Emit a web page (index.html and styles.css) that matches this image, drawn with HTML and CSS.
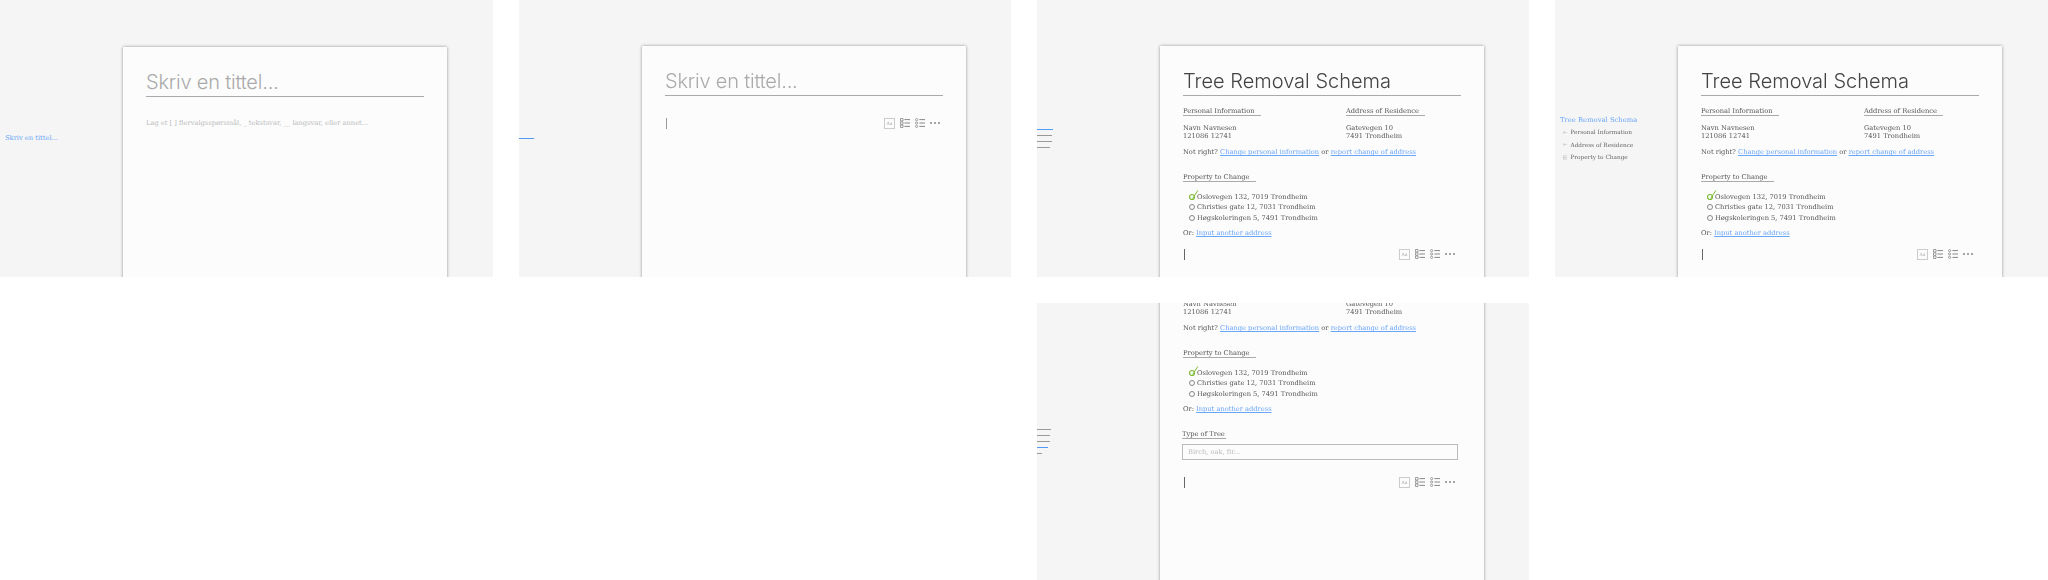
FILE: index.html
```html
<!DOCTYPE html>
<html lang="no">
<head>
    <meta charset="UTF-8">
    <meta name="viewport" content="width=device-width, initial-scale=1.0">
    <title>Tree Removal Schema</title>
    <link rel="stylesheet" href="styles.css">
</head>
<body>
    <!-- Ikoner -->
    <svg class="icon-defs" aria-hidden="true">
        <symbol id="icon-radio-list" viewBox="0 0 10 10">
            <path d="M0.5 0.5h2.5v2.5h-2.5z M0.5 3.8h2.5v2.5h-2.5z M0.5 7h2.5v2.5h-2.5z" fill="none" stroke="currentColor" stroke-width="0.8"/>
            <path d="M4.4 1.6h5.6 M4.4 5h5.6 M4.4 8.4h5.6" stroke="currentColor" stroke-width="1"/>
        </symbol>
        <symbol id="icon-check-list" viewBox="0 0 10 10">
            <circle cx="1.6" cy="1.6" r="1.1" fill="none" stroke="currentColor" stroke-width="0.8"/>
            <circle cx="1.6" cy="5" r="1.1" fill="none" stroke="currentColor" stroke-width="0.8"/>
            <circle cx="1.6" cy="8.4" r="1.1" fill="none" stroke="currentColor" stroke-width="0.8"/>
            <path d="M4.4 1.6h5.6 M4.4 5h5.6 M4.4 8.4h5.6" stroke="currentColor" stroke-width="1"/>
        </symbol>
        <symbol id="icon-more" viewBox="0 0 10 10">
            <circle cx="1" cy="5" r="1" fill="currentColor"/>
            <circle cx="5" cy="5" r="1" fill="currentColor"/>
            <circle cx="9" cy="5" r="1" fill="currentColor"/>
        </symbol>
        <symbol id="icon-text-field" viewBox="0 0 6 6">
            <path d="M1 1v4 M1 3h4" fill="none" stroke="currentColor" stroke-width="0.6"/>
        </symbol>
        <symbol id="icon-options" viewBox="0 0 6 6">
            <path d="M0.5 0.8h5 M0.5 3h5 M0.5 5.2h5 M0.5 0.8v4.4" fill="none" stroke="currentColor" stroke-width="0.6"/>
        </symbol>
        <symbol id="icon-ticked" viewBox="0 0 10 12">
            <circle cx="3" cy="8" r="2.5" fill="none" stroke="#7dbb35" stroke-width="1.2"/>
            <path d="M3.6 9.6 L8.8 1.5" fill="none" stroke="#7dbb35" stroke-width="1"/>
        </symbol>
    </svg>

    <main class="board">
        <!-- 1: tomt skjema -->
        <section class="frame">
            <aside class="outline">
                <span class="outline-title">Skriv en tittel...</span>
            </aside>
            <div class="sheet sheet-low">
                <h1 class="doc-title is-empty">Skriv en tittel...</h1>
                <p class="hint">Lag et [ ] flervalgsspørsmål, _ tekstsvar, __ langsvar, eller annet...</p>
            </div>
        </section>

        <!-- 2: markør i tomt skjema -->
        <section class="frame">
            <aside class="outline">
                <div class="bars">
                    <i class="bar bar-active bar-15"></i>
                </div>
            </aside>
            <div class="sheet">
                <h1 class="doc-title is-empty">Skriv en tittel...</h1>
                <div class="editor editor-first">
                    <span class="cursor cursor-light"></span>
                    <div class="tools tools-wide">
                        <span class="tool-text">Aa</span>
                        <svg class="tool"><use href="#icon-radio-list"/></svg>
                        <svg class="tool"><use href="#icon-check-list"/></svg>
                        <svg class="tool"><use href="#icon-more"/></svg>
                    </div>
                </div>
            </div>
        </section>

        <!-- 3: utfylt skjema, kollapset meny -->
        <section class="frame">
            <aside class="outline">
                <div class="bars">
                    <i class="bar bar-active bar-16"></i>
                    <i class="bar bar-15"></i>
                    <i class="bar bar-15"></i>
                    <i class="bar bar-13"></i>
                </div>
            </aside>
            <div class="sheet">
                <h1 class="doc-title">Tree Removal Schema</h1>
                <div class="columns">
                    <div class="column">
                        <h2 class="section-title">Personal Information</h2>
                        <p class="address">Navn Navnesen<br>121086 12741</p>
                    </div>
                    <div class="column">
                        <h2 class="section-title">Address of Residence</h2>
                        <p class="address">Gatevegen 10<br>7491 Trondheim</p>
                    </div>
                </div>
                <p class="note">Not right? <a href="#">Change personal information</a> or <a href="#">report change of address</a></p>
                <h2 class="section-title section-gap">Property to Change</h2>
                <ul class="options">
                    <li><svg class="tick"><use href="#icon-ticked"/></svg>Oslovegen 132, 7019 Trondheim</li>
                    <li><span class="radio"></span>Christies gate 12, 7031 Trondheim</li>
                    <li><span class="radio"></span>Høgskoleringen 5, 7491 Trondheim</li>
                </ul>
                <p class="note-or">Or: <a href="#">Input another address</a></p>
                <div class="editor">
                    <span class="cursor"></span>
                    <div class="tools">
                        <span class="tool-text">Aa</span>
                        <svg class="tool"><use href="#icon-radio-list"/></svg>
                        <svg class="tool"><use href="#icon-check-list"/></svg>
                        <svg class="tool"><use href="#icon-more"/></svg>
                    </div>
                </div>
            </div>
        </section>

        <!-- 4: utfylt skjema, åpen meny -->
        <section class="frame">
            <aside class="outline">
                <nav class="outline-list">
                    <a class="outline-head" href="#">Tree Removal Schema</a>
                    <span class="outline-item"><svg class="outline-icon"><use href="#icon-text-field"/></svg>Personal Information</span>
                    <span class="outline-item"><svg class="outline-icon"><use href="#icon-text-field"/></svg>Address of Residence</span>
                    <span class="outline-item"><svg class="outline-icon"><use href="#icon-options"/></svg>Property to Change</span>
                </nav>
            </aside>
            <div class="sheet">
                <h1 class="doc-title">Tree Removal Schema</h1>
                <div class="columns">
                    <div class="column">
                        <h2 class="section-title">Personal Information</h2>
                        <p class="address">Navn Navnesen<br>121086 12741</p>
                    </div>
                    <div class="column">
                        <h2 class="section-title">Address of Residence</h2>
                        <p class="address">Gatevegen 10<br>7491 Trondheim</p>
                    </div>
                </div>
                <p class="note">Not right? <a href="#">Change personal information</a> or <a href="#">report change of address</a></p>
                <h2 class="section-title section-gap">Property to Change</h2>
                <ul class="options">
                    <li><svg class="tick"><use href="#icon-ticked"/></svg>Oslovegen 132, 7019 Trondheim</li>
                    <li><span class="radio"></span>Christies gate 12, 7031 Trondheim</li>
                    <li><span class="radio"></span>Høgskoleringen 5, 7491 Trondheim</li>
                </ul>
                <p class="note-or">Or: <a href="#">Input another address</a></p>
                <div class="editor">
                    <span class="cursor"></span>
                    <div class="tools">
                        <span class="tool-text">Aa</span>
                        <svg class="tool"><use href="#icon-radio-list"/></svg>
                        <svg class="tool"><use href="#icon-check-list"/></svg>
                        <svg class="tool"><use href="#icon-more"/></svg>
                    </div>
                </div>
            </div>
        </section>

        <!-- 5: rullet ned, nytt tekstfelt -->
        <section class="frame frame-scrolled">
            <aside class="outline">
                <div class="bars">
                    <i class="bar bar-14"></i>
                    <i class="bar bar-13"></i>
                    <i class="bar bar-13"></i>
                    <i class="bar bar-active bar-11"></i>
                    <i class="bar bar-5"></i>
                </div>
            </aside>
            <div class="sheet sheet-scrolled">
                <h1 class="doc-title">Tree Removal Schema</h1>
                <div class="columns">
                    <div class="column">
                        <h2 class="section-title">Personal Information</h2>
                        <p class="address">Navn Navnesen<br>121086 12741</p>
                    </div>
                    <div class="column">
                        <h2 class="section-title">Address of Residence</h2>
                        <p class="address">Gatevegen 10<br>7491 Trondheim</p>
                    </div>
                </div>
                <p class="note">Not right? <a href="#">Change personal information</a> or <a href="#">report change of address</a></p>
                <h2 class="section-title section-gap">Property to Change</h2>
                <ul class="options">
                    <li><svg class="tick"><use href="#icon-ticked"/></svg>Oslovegen 132, 7019 Trondheim</li>
                    <li><span class="radio"></span>Christies gate 12, 7031 Trondheim</li>
                    <li><span class="radio"></span>Høgskoleringen 5, 7491 Trondheim</li>
                </ul>
                <p class="note-or">Or: <a href="#">Input another address</a></p>
                <h2 class="section-title section-gap section-short">Type of Tree</h2>
                <div class="text-input">Birch, oak, fir...</div>
                <div class="editor editor-after-input">
                    <span class="cursor"></span>
                    <div class="tools">
                        <span class="tool-text">Aa</span>
                        <svg class="tool"><use href="#icon-radio-list"/></svg>
                        <svg class="tool"><use href="#icon-check-list"/></svg>
                        <svg class="tool"><use href="#icon-more"/></svg>
                    </div>
                </div>
            </div>
        </section>
    </main>
</body>
</html>
```

FILE: styles.css
```css
body {
    margin: 0;
    background-color: #fff;
    font-family: "DejaVu Serif", "Liberation Serif", serif;
    font-size: 6.7px;
    line-height: 8px;
    color: #555;
}

a {
    color: #6aa6f8;
}

.icon-defs {
    display: none;
}

/* Rutenett med skjermbilder */
.board {
    display: grid;
    grid-template-columns: 493px 492px 492px 493px;
    grid-template-rows: 277px 277px;
    column-gap: 26px;
    row-gap: 26px;
    filter: blur(0.3px);
}

.frame {
    display: flex;
    align-items: flex-start;
    height: 277px;
    overflow: hidden;
    background-color: #f5f5f5;
}

.frame-scrolled {
    grid-column: 3;
}

/* Meny til venstre */
.outline {
    flex: none;
    display: flex;
    align-items: center;
    width: 123px;
    height: 277px;
}

.outline-title {
    margin-left: 5px;
    margin-bottom: 1px;
    color: #6aa6f8;
}

.bars {
    display: flex;
    flex-direction: column;
    gap: 5px;
}

.bar {
    display: block;
    height: 1px;
    background-color: #999;
}

.bar-active {
    background-color: #4f9bf7;
}

.bar-16 { width: 16px; }
.bar-15 { width: 15px; }
.bar-14 { width: 14px; }
.bar-13 { width: 13px; }
.bar-11 { width: 11px; }
.bar-5 { width: 5px; }

.outline-list {
    display: flex;
    flex-direction: column;
    gap: 4.5px;
    margin-left: 5px;
}

.outline-head {
    font-size: 6.8px;
    line-height: 8px;
    text-decoration: none;
}

.outline-item {
    display: flex;
    align-items: center;
    gap: 3px;
    margin-left: 3px;
    font-size: 5.75px;
    color: #666;
}

.outline-icon {
    width: 4.5px;
    height: 5px;
    color: #aaa;
}

/* Selve arket */
.sheet {
    flex: none;
    box-sizing: border-box;
    width: 324px;
    height: 420px;
    margin-top: 46px;
    padding: 21px 23px 0;
    background-color: #fcfcfc;
    box-shadow: 0 0 3px rgba(0, 0, 0, 0.4);
}

.sheet-low {
    margin-top: 47px;
}

.sheet-scrolled {
    margin-top: -81px;
}

.doc-title {
    margin: 0;
    border-bottom: 1px solid #aaa;
    font-family: Inter, "Open Sans", sans-serif;
    font-size: 20px;
    font-weight: 300;
    line-height: 28px;
    color: #444;
}

.doc-title.is-empty {
    letter-spacing: -0.2px;
    color: #aaa;
}

.hint {
    margin: 22px 0 0;
    color: #bbb;
}

.columns {
    display: flex;
    margin-top: 11px;
}

.column {
    flex: none;
    width: 163px;
}

.column:last-child {
    width: 115px;
}

.section-title {
    display: inline-block;
    margin: 0;
    padding-right: 6px;
    border-bottom: 1px solid #aaa;
    font-size: inherit;
    font-weight: normal;
    white-space: nowrap;
    color: #555;
}

.section-gap {
    display: table;
    margin-top: 17px;
}

.section-short {
    margin-left: -1px;
    padding-right: 1px;
}

.address {
    margin: 8px 0 0;
}

.note {
    margin: 8px 0 0;
}

.options {
    margin: 9.5px 0 0;
    padding: 0 0 0 6px;
    list-style: none;
    line-height: 10.5px;
}

.options li {
    display: flex;
    align-items: center;
    gap: 2px;
    height: 10.5px;
}

.radio {
    flex: none;
    box-sizing: border-box;
    width: 6px;
    height: 6px;
    border: 1px solid #888;
    border-radius: 50%;
}

.tick {
    flex: none;
    width: 10px;
    height: 12px;
    margin: -4px -4px 0 0;
    overflow: visible;
}

.note-or {
    margin: 6px 0 0;
}

.text-input {
    box-sizing: border-box;
    width: 276px;
    height: 16px;
    margin: 5px 0 0 -1px;
    padding-left: 5px;
    border: 1px solid #bbb;
    line-height: 14px;
    color: #bbb;
}

/* Rad med markør og verktøy */
.editor {
    display: flex;
    justify-content: space-between;
    align-items: center;
    height: 12px;
    margin-top: 11px;
}

.editor-first {
    margin-top: 21px;
}

.editor-after-input {
    margin-top: 16px;
}

.cursor {
    width: 1px;
    height: 11px;
    margin-left: 1px;
    background-color: #666;
}

.cursor-light {
    background-color: #999;
}

.tools {
    display: flex;
    align-items: center;
    gap: 5px;
    padding-right: 6px;
    color: #888;
}

.tools-wide {
    padding-right: 3px;
}

.tool {
    width: 10px;
    height: 10px;
}

.tool-text {
    box-sizing: border-box;
    width: 11px;
    height: 11px;
    border: 1px solid #ccc;
    font-size: 4.5px;
    line-height: 9px;
    text-align: center;
    color: #aaa;
}
```
